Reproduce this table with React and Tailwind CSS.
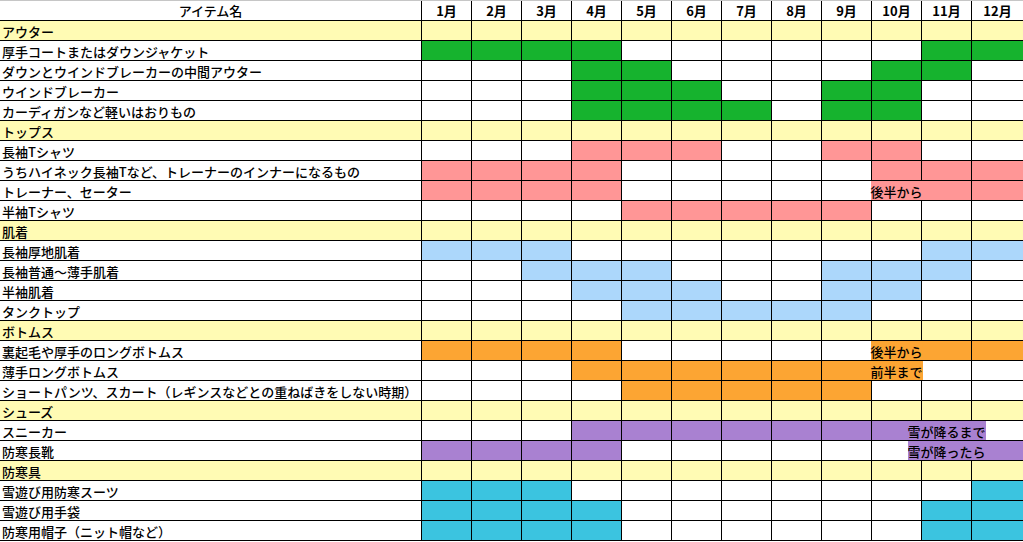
import React from "react";

const MONTHS = ["1月", "2月", "3月", "4月", "5月", "6月", "7月", "8月", "9月", "10月", "11月", "12月"];

const FILL = {
  green: "bg-[#16b32e]",
  pink: "bg-[#ff9696]",
  blue: "bg-[#acd7fb]",
  orange: "bg-[#fca533]",
  purple: "bg-[#a981d1]",
  cyan: "bg-[#3bc4e0]",
};

const rows = [
  { cat: "アウター" },
  { label: "厚手コートまたはダウンジャケット", c: "green", m: [1, 2, 3, 4, 11, 12] },
  { label: "ダウンとウインドブレーカーの中間アウター", c: "green", m: [4, 5, 10, 11] },
  { label: "ウインドブレーカー", c: "green", m: [4, 5, 6, 9, 10] },
  { label: "カーディガンなど軽いはおりもの", c: "green", m: [4, 5, 6, 7, 9, 10] },
  { cat: "トップス" },
  { label: "長袖Tシャツ", c: "pink", m: [4, 5, 6, 9, 10] },
  { label: "うちハイネック長袖Tなど、トレーナーのインナーになるもの", c: "pink", m: [1, 2, 3, 4, 10, 11, 12] },
  { label: "トレーナー、セーター", c: "pink", m: [1, 2, 3, 4, 10, 11, 12], note: [10, "後半から"] },
  { label: "半袖Tシャツ", c: "pink", m: [5, 6, 7, 8, 9] },
  { cat: "肌着" },
  { label: "長袖厚地肌着", c: "blue", m: [1, 2, 3, 11, 12] },
  { label: "長袖普通～薄手肌着", c: "blue", m: [3, 4, 5, 9, 10, 11] },
  { label: "半袖肌着", c: "blue", m: [4, 5, 6, 9, 10] },
  { label: "タンクトップ", c: "blue", m: [5, 6, 7, 8, 9] },
  { cat: "ボトムス" },
  { label: "裏起毛や厚手のロングボトムス", c: "orange", m: [1, 2, 3, 4, 10, 11, 12], note: [10, "後半から"] },
  { label: "薄手ロングボトムス", c: "orange", m: [4, 5, 6, 7, 8, 9, 10], note: [10, "前半まで"] },
  { label: "ショートパンツ、スカート（レギンスなどとの重ねばきをしない時期）", c: "orange", m: [5, 6, 7, 8, 9] },
  { cat: "シューズ" },
  { label: "スニーカー", c: "purple", m: [4, 5, 6, 7, 8, 9, 10, 11], note: [11, "雪が降るまで"] },
  { label: "防寒長靴", c: "purple", m: [1, 2, 3, 4, 11, 12], note: [11, "雪が降ったら"] },
  { cat: "防寒具" },
  { label: "雪遊び用防寒スーツ", c: "cyan", m: [1, 2, 3, 12] },
  { label: "雪遊び用手袋", c: "cyan", m: [1, 2, 3, 4, 11, 12] },
  { label: "防寒用帽子（ニット帽など）", c: "cyan", m: [1, 2, 3, 4, 11, 12] },
];

function MonthCell({ month, fill, note }) {
  const last = month === 12;
  return (
    <div className={`relative h-full border-l border-black ${last ? "flex-1" : "w-[50px]"} ${fill}`}>
      {note && (
        <span
          className={`absolute top-0 left-1/2 z-10 -translate-x-1/2 h-full whitespace-nowrap pt-px leading-[19px] ${fill}`}
        >
          {note}
        </span>
      )}
    </div>
  );
}

function Row({ row }) {
  if (row.cat) {
    return (
      <div className="flex h-5 border-b border-black bg-[#fffbb4]">
        <div className="w-[421px] h-full pl-[2px] pt-px leading-[19px] whitespace-nowrap">{row.cat}</div>
        {MONTHS.map((_, i) => (
          <MonthCell key={i} month={i + 1} fill="bg-[#fffbb4]" />
        ))}
      </div>
    );
  }
  return (
    <div className="flex h-5 border-b border-black bg-white">
      <div className="w-[421px] h-full pl-[2px] pt-px leading-[19px] whitespace-nowrap overflow-hidden">{row.label}</div>
      {MONTHS.map((_, i) => {
        const mo = i + 1;
        const on = row.m.includes(mo);
        const note = row.note && row.note[0] === mo ? row.note[1] : null;
        return <MonthCell key={i} month={mo} fill={on ? FILL[row.c] : "bg-white"} note={note} />;
      })}
    </div>
  );
}

export default function App() {
  return (
    <div className="w-[1023px] h-[542px] bg-white text-black text-[13px] font-medium font-['Noto_Sans_CJK_JP',sans-serif] overflow-hidden">
      {/* ヘッダー */}
      <div className="flex h-[21px] border-t border-b border-t-[#c6c6c6] border-b-black">
        <div className="w-[421px] h-full text-center leading-[19px]">アイテム名</div>
        {MONTHS.map((m, i) => (
          <div
            key={m}
            className={`h-full border-l border-black text-center font-bold leading-[19px] ${i === 11 ? "flex-1" : "w-[50px]"}`}
          >
            {m}
          </div>
        ))}
      </div>
      {rows.map((row, i) => (
        <Row key={i} row={row} />
      ))}
    </div>
  );
}
